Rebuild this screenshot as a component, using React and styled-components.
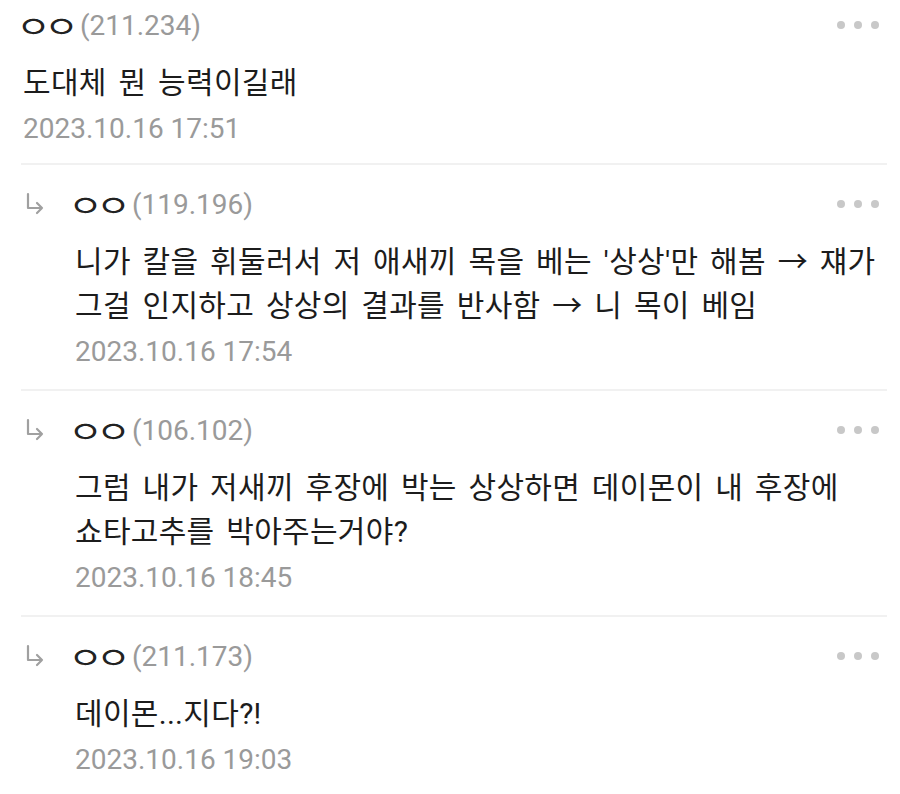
import styled, { createGlobalStyle } from "styled-components";

const GlobalStyle = createGlobalStyle`
  body {
    margin: 0;
    background: #fff;
    font-family: Roboto, "Noto Sans CJK KR", sans-serif;
  }
`;

const comments = [
  {
    ip: "211.234",
    text: "도대체 뭔 능력이길래",
    date: "2023.10.16 17:51",
  },
  {
    reply: true,
    ip: "119.196",
    text: "니가 칼을 휘둘러서 저 애새끼 목을 베는 '상상'만 해봄 → 쟤가 그걸 인지하고 상상의 결과를 반사함 → 니 목이 베임",
    date: "2023.10.16 17:54",
  },
  {
    reply: true,
    ip: "106.102",
    text: "그럼 내가 저새끼 후장에 박는 상상하면 데이몬이 내 후장에 쇼타고추를 박아주는거야?",
    date: "2023.10.16 18:45",
  },
  {
    reply: true,
    ip: "211.173",
    text: "데이몬...지다?!",
    date: "2023.10.16 19:03",
  },
];

function ReplyArrow() {
  return (
    <svg width="22" height="24" viewBox="0 0 22 24" fill="none">
      <path
        d="M5 3 V17 H19 M14 12 L19 17 L14 22"
        stroke="#a0a0a0"
        strokeWidth="2.2"
        strokeLinecap="round"
        strokeLinejoin="round"
      />
    </svg>
  );
}

export default function App() {
  return (
    <>
      <GlobalStyle />
      <List>
        {comments.map((c) => (
          <Comment key={c.date}>
            <Indent $reply={c.reply}>{c.reply && <ReplyArrow />}</Indent>
            <Content>
              <Header>
                <Name>ㅇㅇ</Name>
                <Ip>({c.ip})</Ip>
                <More>
                  <Dot />
                  <Dot />
                  <Dot />
                </More>
              </Header>
              <Body>{c.text}</Body>
              <Date>{c.date}</Date>
            </Content>
          </Comment>
        ))}
      </List>
    </>
  );
}

const List = styled.div`
  width: 866px;
  margin-left: 21px;
`;

const Comment = styled.div`
  display: flex;
  padding: 19px 0 17px;
  border-bottom: 2px solid #f1f1f1;

  &:first-child {
    padding-top: 5px;
    padding-bottom: 14px;
  }
  &:last-child {
    border-bottom: none;
  }
`;

const Indent = styled.div`
  flex: none;
  width: ${(p) => (p.$reply ? "54px" : "2px")};
  padding-top: 7px;
  padding-left: 2px;
  box-sizing: border-box;
`;

const Content = styled.div`
  flex: 1;
  min-width: 0;
`;

const Header = styled.div`
  display: flex;
  align-items: center;
  height: 40px;
`;

const Name = styled.span`
  font-family: "Noto Sans CJK KR", sans-serif;
  font-size: 38px;
  line-height: 40px;
  font-weight: 400;
  color: #222;
  letter-spacing: -7px;
  margin-left: -7px;
  margin-right: 8px;
  transform: scaleY(0.8);
`;

const Ip = styled.span`
  font-size: 28px;
  color: #9a9a9a;
`;

const More = styled.div`
  margin-left: auto;
  margin-right: 8px;
  display: flex;
  gap: 9px;
`;

const Dot = styled.span`
  width: 8px;
  height: 8px;
  border-radius: 50%;
  background: #c8c8c8;
`;

const Body = styled.div`
  margin-top: 16px;
  font-size: 30px;
  line-height: 44px;
  letter-spacing: 0.3px;
  word-spacing: 4px;
  color: #1c1c1c;
  word-break: keep-all;
`;

const Date = styled.div`
  margin-top: 4px;
  font-size: 28px;
  line-height: 40px;
  color: #9a9a9a;
`;
